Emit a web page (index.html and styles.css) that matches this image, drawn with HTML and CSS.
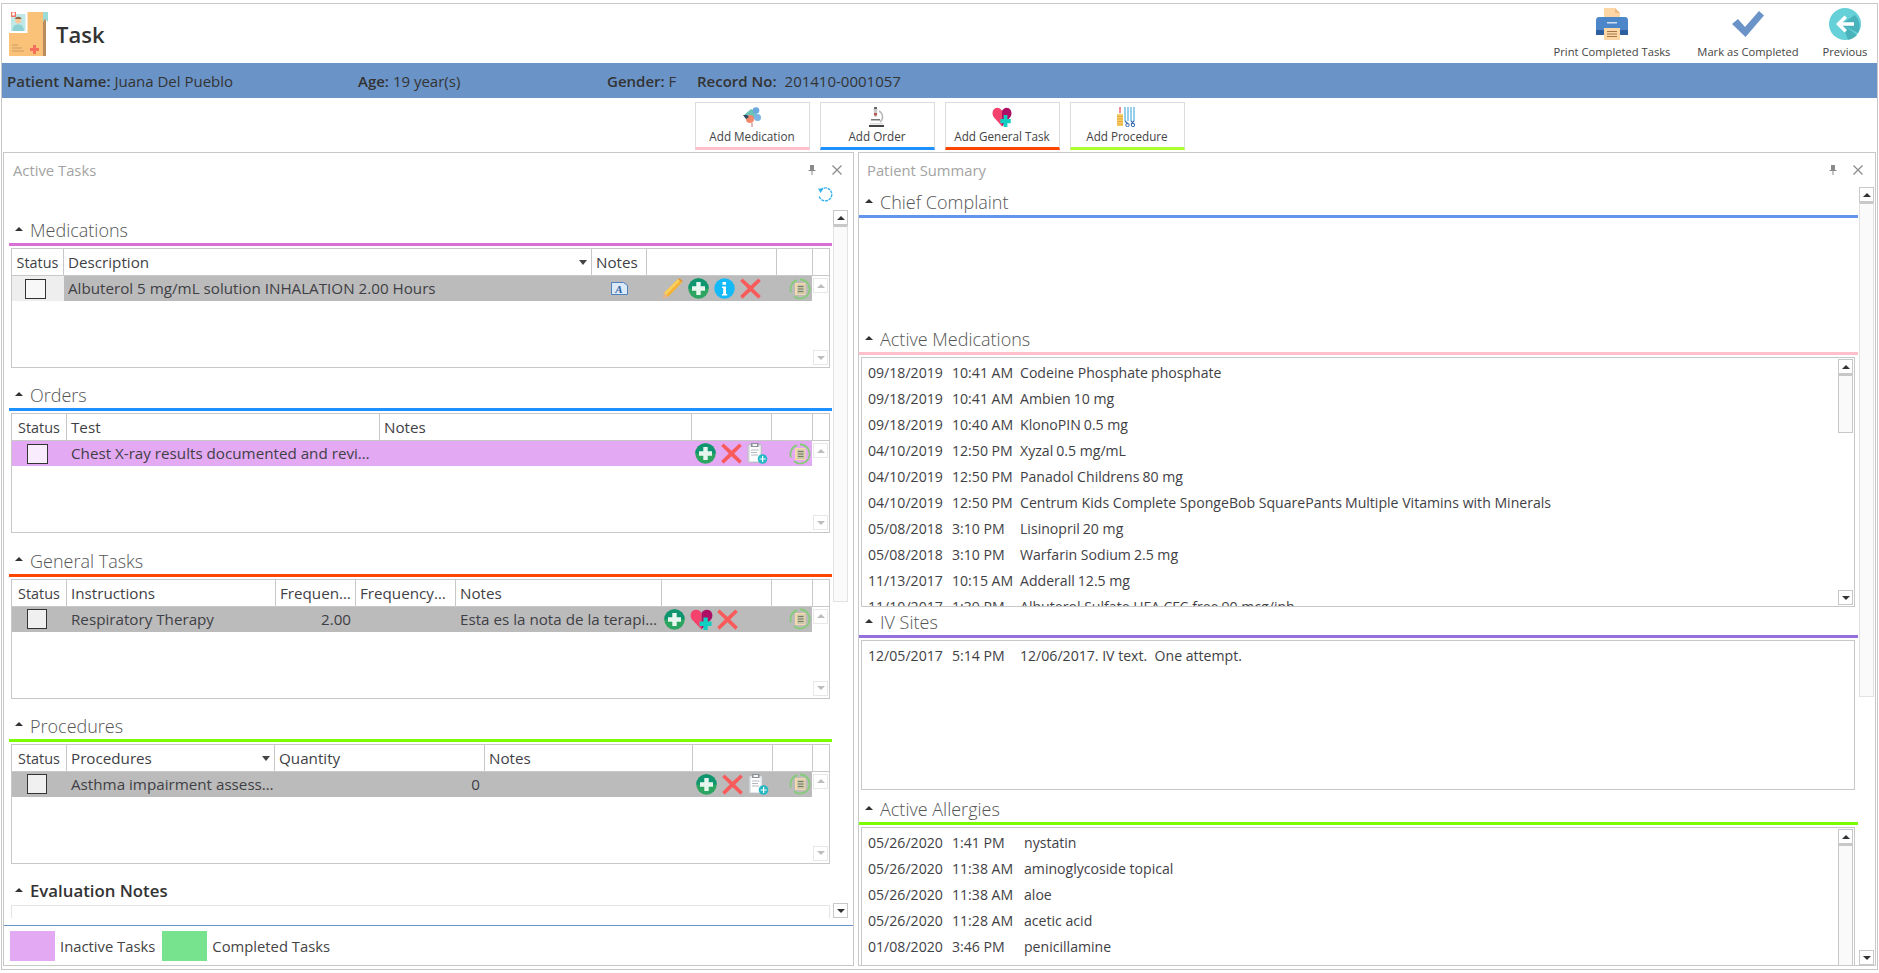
FILE: index.html
```html
<!DOCTYPE html>
<html lang="en">
<head>
<meta charset="utf-8">
<title>Task</title>
<link rel="stylesheet" href="styles.css">
</head>
<body>
<svg class="defs" width="0" height="0" aria-hidden="true">
  <symbol id="i-plus" viewBox="0 0 21 21">
    <circle cx="10.5" cy="10.5" r="10.2" fill="#2ba55f"/>
    <path d="M.3 10.5a10.2 10.2 0 0 1 20.4 0z" fill="#0f9570"/>
    <path d="M8.3 4h4.4v4.3H17v4.4h-4.3V17H8.3v-4.3H4V8.300h4.300z" fill="#e6f6ee"/>
  </symbol>
  <symbol id="i-x" viewBox="0 0 21 21">
    <path d="M2.500 .5 10.500 7.800 18.500 .5 20.800 3 13.200 10.500 20.800 18 18.500 20.800 10.500 13.200 2.500 20.800 .2 18 7.800 10.500 .2 3z" fill="#f95b5b"/>
  </symbol>
  <symbol id="i-info" viewBox="0 0 21 21">
    <circle cx="10.500" cy="10.500" r="10.200" fill="#14b9f8"/>
    <path d="M8.500 4h3.500v2.800H8.500zM8 8.500h4V16h1.200v1.500H8V16h1.200v-6H8z" fill="#fff"/>
  </symbol>
  <symbol id="i-pencil" viewBox="0 0 21 21">
    <path d="M16 1 20 4.500 6 19 2 15z" fill="#f5b336"/>
    <path d="M16 1 18 2.700 4 17 2 15z" fill="#f9cf5f"/>
    <path d="M2 15 6 19 .5 21z" fill="#e8b48c"/>
    <path d="M16 1 18 .5 20.500 3 20 4.500z" fill="#e5912c"/>
  </symbol>
  <symbol id="i-clip" viewBox="0 0 21 21">
    <rect x="1" y="1.500" width="13.500" height="18" rx="1.500" fill="#e2e6ea" stroke="#b9bdc2"/>
    <rect x="3" y="4" width="9.500" height="14" fill="#fff"/>
    <rect x="4" y="0" width="7.500" height="4" fill="#8d9298"/>
    <rect x="5.500" y="1" width="4.500" height="2" fill="#f4f4f4"/>
    <path d="M4 7h7.500M4 9.500h6M4 12h7" stroke="#b3b8bd"/>
    <circle cx="15.500" cy="16" r="4.800" fill="#27b8c6"/>
    <path d="M15 13h1.200v2.400h2.400v1.200h-2.400V19H15v-2.400h-2.400v-1.200H15z" fill="#fff"/>
  </symbol>
  <symbol id="i-note" viewBox="0 0 22 22">
    <path d="M11 1.500a9.500 9.500 0 1 1-6 16.800" fill="none" stroke="#85cc78" stroke-width="1.800"/>
    <path d="M2 14.500A9.500 9.500 0 0 1 8 2.200" fill="none" stroke="#85cc78" stroke-width="1.800"/>
    <rect x="6" y="5" width="10.500" height="12" fill="#f6d8ae"/>
    <rect x="8" y="6.500" width="7.500" height="9.500" fill="#c9c9a8"/>
    <path d="M9 8.500h5.500M9 11h5.500M9 13.500h5.500" stroke="#77786a"/>
  </symbol>
  <symbol id="i-heart" viewBox="0 0 24 21" preserveAspectRatio="none">
    <path d="M12 20.500 2.500 11C-.5 7.800.3 3 3.800 1.300 6.800 0 10 1 12 4z" fill="#f5426c"/>
    <path d="M12 4c2-3 5.200-4 8.200-2.700C23.700 3 24.500 7.800 21.500 11L12 20.500z" fill="#ad0f65"/>
    <path d="M14 8.500h4.500V12.500H22.500V17H18.500V21H14V17H10V12.500h4z" fill="#10cfc0"/>
  </symbol>
  <symbol id="i-caret-d" viewBox="0 0 8 5">
    <path d="M0 0h8L4 5z" fill="#444"/>
  </symbol>
</svg>

<div class="app">
  <header class="top">
    <div class="brand">
      <svg class="logo" viewBox="0 0 39 44" aria-hidden="true">
        <rect x="0" y="0" width="37" height="44" fill="#f9c278"/>
        <path d="M34 2h3v42h-3z" fill="#b98c5c"/>
        <path d="M34 0h5v10l-3-3-2 3z" fill="#9cdcd6"/>
        <rect x="0" y="0" width="18.500" height="21" fill="#fff"/>
        <rect x="2" y="2" width="14.500" height="17" fill="#bfe8e6"/>
        <circle cx="9.200" cy="8.500" r="3" fill="#f6c99a"/>
        <path d="M6 7c.5-3 6-3 6.500 0z" fill="#8d6a45"/>
        <path d="M3.500 19c0-5 2.500-6.500 5.700-6.500s5.700 1.500 5.700 6.500z" fill="#8ed2d4"/>
        <rect x="2" y="-1" width="5" height="6" fill="#f57263"/>
        <rect x="3.200" y=".5" width="2.500" height="3" fill="#fff"/>
        <path d="M3 33h6M3 36h10M3 39h12" stroke="#c99a62" stroke-width="1"/>
        <path d="M24 33h3v3h3v3h-3v3h-3v-3h-3v-3h3z" fill="#f4705a"/>
      </svg>
      <h1 class="page-title">Task</h1>
    </div>
    <nav class="top-actions">
      <div class="act">
        <svg class="act-icon" viewBox="0 0 32 32" aria-hidden="true">
          <path d="M8 0h11l5 5v10H8z" fill="#fdd6a5"/>
          <path d="M19 0l5 5h-5z" fill="#f0bd85"/>
          <path d="M3 9h26c2 0 3 1.500 3 3v15H0V12c0-1.500 1-3 3-3z" fill="#4a86c8"/>
          <path d="M0 22h32v5H0z" fill="#2d5f9e"/>
          <path d="M11 14h10v1.500H11z" fill="#cfe0f2"/>
          <path d="M8 20h16v12H8z" fill="#fdd6a5"/>
          <path d="M11 23.500h10M11 26h10M11 28.500h10" stroke="#a5764a"/>
        </svg>
        <span class="act-label">Print Completed Tasks</span>
      </div>
      <div class="act">
        <svg class="act-icon" viewBox="0 0 32 32" aria-hidden="true">
          <path d="M0 16 6 11 13 19 27 3 32 7.500 13.500 29z" fill="#6a93c7"/>
        </svg>
        <span class="act-label">Mark as Completed</span>
      </div>
      <div class="act act-prev">
        <svg class="act-icon" viewBox="0 0 32 32" aria-hidden="true">
          <circle cx="16" cy="16" r="16" fill="#66d0d9"/>
          <path d="M12 16 26 7a16 16 0 0 1 3 18z M13 16l15 11a16 16 0 0 1-9 4.800z" fill="#49b2ba"/>
          <path d="M15.500 7.500 18 10l-4.300 4.300H25v3.400H13.700L18 22l-2.500 2.500L7 16z" fill="#fff"/>
        </svg>
        <span class="act-label">Previous</span>
      </div>
    </nav>
  </header>

  <div class="patient-bar">
    <div><b>Patient Name:</b> Juana Del Pueblo</div>
    <div><b>Age:</b> 19 year(s)</div>
    <div><b>Gender:</b> F</div>
    <div class="record"><b>Record No:</b><span>201410-0001057</span></div>
  </div>

  <div class="add-row">
    <div class="add-btn add-pink">
      <svg class="add-icon" viewBox="0 0 20 20" aria-hidden="true">
        <path d="M2 8 9 2 15 5 13 11H5z" fill="#6cc4b8"/>
        <circle cx="14" cy="3.500" r="3.300" fill="#6aa8de"/>
        <circle cx="15.500" cy="10.500" r="3.500" fill="#7ab5e6"/>
        <circle cx="8" cy="12" r="4" fill="#f2876c"/>
        <path d="M1 8h4l2 2-3 2z" fill="#2c4a60"/>
        <path d="M10 16v4" stroke="#d9a0a0" stroke-width="1.500"/>
      </svg>
      <span>Add Medication</span>
    </div>
    <div class="add-btn add-blue">
      <svg class="add-icon" viewBox="0 0 20 20" aria-hidden="true">
        <path d="M7 0h3v2H7z" fill="#666"/>
        <path d="M6.500 2h4L9.500 10h-2z" fill="#c9c9c9"/>
        <path d="M7 6h3v2.500H7z" fill="#c0554f"/>
        <path d="M12 4c4 2 5 8 1 11" fill="none" stroke="#bbb" stroke-width="1.600"/>
        <path d="M4 12h9v1.500H4z" fill="#777"/>
        <path d="M3 16h13v1.500H3z" fill="#ddd"/>
        <path d="M2 18h15v2H2z" fill="#444"/>
      </svg>
      <span>Add Order</span>
    </div>
    <div class="add-btn add-red">
      <svg class="add-icon"><use href="#i-heart"/></svg>
      <span>Add General Task</span>
    </div>
    <div class="add-btn add-green">
      <svg class="add-icon" viewBox="0 0 20 20" aria-hidden="true">
        <path d="M2 0h2v6H2z" fill="#ef8b96"/>
        <path d="M0 7h6v12H0z" fill="#f7cd64"/>
        <path d="M0 9.500h6M0 12h6M0 14.500h6M0 17h6" stroke="#e5a83e"/>
        <path d="M8 0v14M11 0v14M14 0v14M17 0v14" stroke="#53aee0" stroke-width="1.200"/>
        <path d="M8 14l3 3M14 14l3 3M17 14l-3 3" stroke="#3b6fb5" stroke-width="1.200"/>
        <circle cx="10.500" cy="18" r="1.700" fill="none" stroke="#3b6fb5"/>
        <circle cx="16" cy="18" r="1.700" fill="none" stroke="#3b6fb5"/>
      </svg>
      <span>Add Procedure</span>
    </div>
  </div>

  <div class="panels">
    <section class="panel panel-left">
      <div class="panel-title">
        <span>Active Tasks</span>
        <div class="panel-tools">
          <svg class="tool" viewBox="0 0 10 10" aria-hidden="true"><path d="M3 0h4v5h1.500v1h-3v4h-1V6h-3V5H3z" fill="#8a8a8a"/></svg>
          <svg class="tool" viewBox="0 0 10 10" aria-hidden="true"><path d="M.5.500l9 9M9.500.500l-9 9" stroke="#8a8a8a" stroke-width="1.200"/></svg>
        </div>
      </div>
      <div class="panel-body">
        <div class="main-col">
          <div class="refresh-row">
            <svg class="refresh" viewBox="0 0 16 16" aria-hidden="true">
              <path d="M3.500 3A6.500 6.500 0 1 1 2 9" fill="none" stroke="#35b2ee" stroke-width="1.400" stroke-dasharray="3 .8"/>
              <path d="M1 1.500 6.500 1.800 3.500 6z" fill="#35b2ee"/>
            </svg>
          </div>

          <div class="sec">
            <div class="sec-head"><i class="caret"></i><h2>Medications</h2></div>
            <div class="line line-orchid"></div>
            <div class="tbl">
              <div class="thead g-med">
                <div class="th th-status">Status</div>
                <div class="th th-sort">Description<svg class="sort"><use href="#i-caret-d"/></svg></div>
                <div class="th">Notes</div><div class="th"></div><div class="th"></div><div class="th th-last"></div>
              </div>
              <div class="tbody">
                <div class="rows">
                  <div class="row row-gray g-med-r">
                    <div class="td td-check td-check-light"><i class="chk"></i></div>
                    <div class="td">Albuterol 5 mg/mL solution INHALATION 2.00 Hours</div>
                    <div class="td td-doc">
                      <svg class="doc-a" viewBox="0 0 17 13" aria-hidden="true">
                        <path d="M.5.500h12l4 3v9H.500z" fill="#dce9f8" stroke="#4f81bd"/>
                        <text x="8" y="11" class="doc-a-text">A</text>
                      </svg>
                    </div>
                    <div class="td td-icons pad-med">
                      <svg class="ic"><use href="#i-pencil"/></svg>
                      <svg class="ic"><use href="#i-plus"/></svg>
                      <svg class="ic"><use href="#i-info"/></svg>
                      <svg class="ic"><use href="#i-x"/></svg>
                    </div>
                    <div class="td td-note"><svg class="ic-note"><use href="#i-note"/></svg></div>
                  </div>
                </div>
                <div class="sb sb-faded">
                  <div class="sb-btn"><i class="caret"></i></div>
                  <div class="sb-btn sb-end"><i class="caret caret-down"></i></div>
                </div>
              </div>
            </div>
          </div>

          <div class="sec">
            <div class="sec-head"><i class="caret"></i><h2>Orders</h2></div>
            <div class="line line-blue"></div>
            <div class="tbl">
              <div class="thead g-ord">
                <div class="th th-status">Status</div>
                <div class="th">Test</div>
                <div class="th">Notes</div><div class="th"></div><div class="th"></div><div class="th th-last"></div>
              </div>
              <div class="tbody">
                <div class="rows">
                  <div class="row row-inactive g-ord-r">
                    <div class="td td-check"><i class="chk chk-pink"></i></div>
                    <div class="td">Chest X-ray results documented and revi…</div>
                    <div class="td"></div>
                    <div class="td td-icons pad-tight">
                      <svg class="ic"><use href="#i-plus"/></svg>
                      <svg class="ic"><use href="#i-x"/></svg>
                      <svg class="ic"><use href="#i-clip"/></svg>
                    </div>
                    <div class="td td-note"><svg class="ic-note"><use href="#i-note"/></svg></div>
                  </div>
                </div>
                <div class="sb sb-faded">
                  <div class="sb-btn"><i class="caret"></i></div>
                  <div class="sb-btn sb-end"><i class="caret caret-down"></i></div>
                </div>
              </div>
            </div>
          </div>

          <div class="sec">
            <div class="sec-head"><i class="caret"></i><h2>General Tasks</h2></div>
            <div class="line line-orange"></div>
            <div class="tbl">
              <div class="thead g-gen">
                <div class="th th-status">Status</div>
                <div class="th">Instructions</div>
                <div class="th">Frequen…</div>
                <div class="th">Frequency…</div>
                <div class="th">Notes</div><div class="th"></div><div class="th"></div><div class="th th-last"></div>
              </div>
              <div class="tbody">
                <div class="rows">
                  <div class="row row-gray g-gen-r">
                    <div class="td td-check"><i class="chk chk-gray"></i></div>
                    <div class="td">Respiratory Therapy</div>
                    <div class="td td-num">2.00</div>
                    <div class="td"></div>
                    <div class="td">Esta es la nota de la terapi…</div>
                    <div class="td td-icons pad-gen">
                      <svg class="ic"><use href="#i-plus"/></svg>
                      <svg class="ic-heart"><use href="#i-heart"/></svg>
                      <svg class="ic"><use href="#i-x"/></svg>
                    </div>
                    <div class="td td-note"><svg class="ic-note"><use href="#i-note"/></svg></div>
                  </div>
                </div>
                <div class="sb sb-faded">
                  <div class="sb-btn"><i class="caret"></i></div>
                  <div class="sb-btn sb-end"><i class="caret caret-down"></i></div>
                </div>
              </div>
            </div>
          </div>

          <div class="sec">
            <div class="sec-head"><i class="caret"></i><h2>Procedures</h2></div>
            <div class="line line-lime"></div>
            <div class="tbl">
              <div class="thead g-pro">
                <div class="th th-status">Status</div>
                <div class="th th-sort">Procedures<svg class="sort"><use href="#i-caret-d"/></svg></div>
                <div class="th">Quantity</div>
                <div class="th">Notes</div><div class="th"></div><div class="th"></div><div class="th th-last"></div>
              </div>
              <div class="tbody">
                <div class="rows">
                  <div class="row row-gray g-pro-r">
                    <div class="td td-check"><i class="chk chk-gray"></i></div>
                    <div class="td">Asthma impairment assess…</div>
                    <div class="td td-num">0</div>
                    <div class="td"></div>
                    <div class="td td-icons pad-tight">
                      <svg class="ic"><use href="#i-plus"/></svg>
                      <svg class="ic"><use href="#i-x"/></svg>
                      <svg class="ic"><use href="#i-clip"/></svg>
                    </div>
                    <div class="td td-note"><svg class="ic-note"><use href="#i-note"/></svg></div>
                  </div>
                </div>
                <div class="sb sb-faded">
                  <div class="sb-btn"><i class="caret"></i></div>
                  <div class="sb-btn sb-end"><i class="caret caret-down"></i></div>
                </div>
              </div>
            </div>
          </div>

          <div class="eval-head"><i class="caret"></i><h2 class="eval-title">Evaluation Notes</h2></div>
          <div class="eval-box"></div>
        </div>
        <div class="sb sb-main">
          <div class="sb-btn"><i class="caret"></i></div>
          <div class="sb-thumb thumb-main"></div>
          <div class="sb-btn sb-end"><i class="caret caret-down"></i></div>
        </div>
      </div>
      <footer class="legend">
        <i class="swatch swatch-inactive"></i><span class="legend-label">Inactive Tasks</span>
        <i class="swatch swatch-done"></i><span class="legend-label">Completed Tasks</span>
      </footer>
    </section>

    <section class="panel panel-right">
      <div class="panel-title panel-title-r">
        <span>Patient Summary</span>
        <div class="panel-tools">
          <svg class="tool" viewBox="0 0 10 10" aria-hidden="true"><path d="M3 0h4v5h1.500v1h-3v4h-1V6h-3V5H3z" fill="#8a8a8a"/></svg>
          <svg class="tool" viewBox="0 0 10 10" aria-hidden="true"><path d="M.5.500l9 9M9.500.500l-9 9" stroke="#8a8a8a" stroke-width="1.200"/></svg>
        </div>
      </div>
      <div class="panel-body panel-body-r">
        <div class="sum-col">
          <div class="sum-head sum-first"><i class="caret"></i><h2>Chief Complaint</h2></div>
          <div class="line line-cornflower"></div>
          <div class="chief-body"></div>

          <div class="sum-head"><i class="caret"></i><h2>Active Medications</h2></div>
          <div class="line line-pink"></div>
          <div class="box box-meds">
            <div class="list">
              <div class="li"><span>09/18/2019</span><span>10:41 AM</span><span class="li-name">Codeine Phosphate<em>phosphate</em></span></div>
              <div class="li"><span>09/18/2019</span><span>10:41 AM</span><span class="li-name">Ambien<em>10 mg</em></span></div>
              <div class="li"><span>09/18/2019</span><span>10:40 AM</span><span class="li-name">KlonoPIN<em>0.5 mg</em></span></div>
              <div class="li"><span>04/10/2019</span><span>12:50 PM</span><span class="li-name">Xyzal<em>0.5 mg/mL</em></span></div>
              <div class="li"><span>04/10/2019</span><span>12:50 PM</span><span class="li-name">Panadol Childrens<em>80 mg</em></span></div>
              <div class="li"><span>04/10/2019</span><span>12:50 PM</span><span class="li-name">Centrum Kids Complete SpongeBob SquarePants<em>Multiple Vitamins with Minerals</em></span></div>
              <div class="li"><span>05/08/2018</span><span>3:10 PM</span><span class="li-name">Lisinopril<em>20 mg</em></span></div>
              <div class="li"><span>05/08/2018</span><span>3:10 PM</span><span class="li-name">Warfarin Sodium<em>2.5 mg</em></span></div>
              <div class="li"><span>11/13/2017</span><span>10:15 AM</span><span class="li-name">Adderall<em>12.5 mg</em></span></div>
              <div class="li"><span>11/10/2017</span><span>1:39 PM</span><span class="li-name">Albuterol Sulfate HFA CFC free<em>90 mcg/inh</em></span></div>
            </div>
            <div class="sb sb-inner">
              <div class="sb-btn"><i class="caret"></i></div>
              <div class="sb-thumb thumb-meds"></div>
              <div class="sb-btn sb-end"><i class="caret caret-down"></i></div>
            </div>
          </div>

          <div class="sum-head sum-iv"><i class="caret"></i><h2>IV Sites</h2></div>
          <div class="line line-purple"></div>
          <div class="box box-iv">
            <div class="list">
              <div class="li li-iv"><span>12/05/2017</span><span>5:14 PM</span><span class="li-note">12/06/2017. IV text.&nbsp; One attempt.</span></div>
            </div>
          </div>

          <div class="sum-head sum-allergy"><i class="caret"></i><h2>Active Allergies</h2></div>
          <div class="line line-lime"></div>
          <div class="box box-allergy">
            <div class="list">
              <div class="li li-al"><span>05/26/2020</span><span>1:41 PM</span><span>nystatin</span></div>
              <div class="li li-al"><span>05/26/2020</span><span>11:38 AM</span><span>aminoglycoside topical</span></div>
              <div class="li li-al"><span>05/26/2020</span><span>11:38 AM</span><span>aloe</span></div>
              <div class="li li-al"><span>05/26/2020</span><span>11:28 AM</span><span>acetic acid</span></div>
              <div class="li li-al"><span>01/08/2020</span><span>3:46 PM</span><span>penicillamine</span></div>
            </div>
            <div class="sb sb-inner sb-allergy">
              <div class="sb-btn"><i class="caret"></i></div>
              <div class="sb-thumb thumb-allergy"></div>
            </div>
          </div>
        </div>
        <div class="sb sb-main-r">
          <div class="sb-btn"><i class="caret"></i></div>
          <div class="sb-thumb thumb-right"></div>
          <div class="sb-btn sb-end"><i class="caret caret-down"></i></div>
        </div>
      </div>
    </section>
  </div>
</div>
</body>
</html>
```
FILE: styles.css
```css
* { box-sizing: border-box; }
html, body { margin: 0; padding: 0; background: #fff; overflow: hidden; }
body { font-family: "Open Sans", "Noto Sans", sans-serif; font-size: 14px; color: #3f3f46; }
.defs { position: absolute; }
h1, h2 { margin: 0; font-weight: 400; }
em { font-style: normal; }

.app {
  margin: 3px 1px 0;
  width: 1877px;
  height: 967px;
  border: 1px solid #c8c8c8;
  display: flex;
  flex-direction: column;
}

/* header */
.top { height: 59px; display: flex; justify-content: space-between; padding: 4px 7px 0 7px; }
.brand { display: flex; align-items: flex-start; }
.logo { width: 39px; height: 44px; margin-top: 4px; }
.page-title { font-size: 22px; line-height: 32px; margin: 10px 0 0 8px; color: #333; font-weight: 600; }
.top-actions { display: flex; }
.act { width: 120px; display: flex; flex-direction: column; align-items: center; margin-left: 16px; }
.act-prev { width: 50px; margin-left: 12px; }
.act-icon { width: 32px; height: 32px; }
.act-label { font-size: 11.2px; line-height: 16px; margin-top: 4px; color: #444; white-space: nowrap; }

.patient-bar {
  height: 35px;
  background: #6a93c7;
  display: grid;
  grid-template-columns: 351px 249px 90px auto;
  align-items: center;
  padding-left: 5px;
  color: #333;
  font-size: 15px;
}
.patient-bar b { font-weight: 600; }
.record span { margin-left: 8px; }

/* add buttons */
.add-row { height: 54px; display: flex; justify-content: center; gap: 10px; padding: 4px 0 0 0; }
.add-btn {
  width: 115px; height: 48px;
  border: 1px solid #dcdcdc;
  border-bottom-width: 3px;
  display: flex; flex-direction: column; align-items: center;
  padding-top: 4px;
  font-size: 11.7px; line-height: 16px; color: #444;
}
.add-icon { width: 20px; height: 20px; margin-bottom: 1px; }
.add-pink { border-bottom-color: #ffc0cb; }
.add-blue { border-bottom-color: #1e90ff; }
.add-red { border-bottom-color: #ff4500; }
.add-green { border-bottom-color: #adff2f; }

/* panels */
.panels { flex: 1; display: flex; gap: 4px; padding: 0 0 3px 1px; min-height: 0; }
.panel { border: 1px solid #c8c8c8; display: flex; flex-direction: column; min-height: 0; overflow: hidden; }
.panel-left { width: 851px; }
.panel-right { width: 1018px; }
.panel-title {
  height: 34px; flex: none;
  display: flex; justify-content: space-between; align-items: center;
  padding: 0 11px 0 9px;
  color: #a3a3a3;
  font-size: 14.8px;
}
.panel-title-r { padding: 0 12px 0 8px; }
.panel-tools { display: flex; gap: 15px; margin-top: -1px; }
.tool { width: 10px; height: 10px; }
.panel-body { height: 731px; flex: none; display: flex; padding-left: 5px; overflow: hidden; }
.panel-body-r { flex: 1; height: auto; padding-left: 0; }
.main-col { width: 823px; flex: none; }

.refresh-row { height: 16px; display: flex; justify-content: flex-end; }
.refresh { width: 16px; height: 16px; margin-right: -1px; }

.sec { height: 165.33px; }
.sec-head { height: 40px; display: flex; align-items: center; padding: 14px 0 0 6px; gap: 7px; }
.sec-head h2, .sum-head h2 { font-size: 18px; line-height: 26px; font-weight: 300; color: #555; }
.caret { display: block; width: 0; height: 0; border: 4px solid transparent; border-top-width: 0; border-bottom: 4px solid #333; margin-bottom: 3px; }
.caret-down { border-bottom: 0; border-top: 4px solid #333; margin: 0; }

.line { height: 3px; }
.line-orchid { background: #da70d6; }
.line-blue { background: #1e90ff; }
.line-orange { background: #ff4500; }
.line-lime { background: #7cfc00; }
.line-cornflower { background: #6495ed; }
.line-pink { background: #ffc0cb; }
.line-purple { background: #9370db; }

/* tables */
.tbl { margin: 2px 0 0 2px; width: 819px; height: 120px; border: 1px solid #c8c8c8; display: flex; flex-direction: column; font-size: 15.2px; }
.thead { height: 27px; flex: none; display: grid; border-bottom: 1px solid #c8c8c8; }
.th { border-right: 1px solid #c8c8c8; padding: 0 4px; line-height: 27px; white-space: nowrap; overflow: hidden; position: relative; }
.th-status { padding: 0; text-align: center; font-size: 14.4px; }
.th-last { border-right: 0; }
.sort { position: absolute; right: 4px; top: 11px; width: 8px; height: 5px; }
.g-med { grid-template-columns: 52px 528px 55px 130px 36px 1fr; }
.g-ord { grid-template-columns: 55px 313px 312px 80px 41px 1fr; }
.g-gen { grid-template-columns: 55px 209px 80px 100px 206px 110px 41px 1fr; }
.g-pro { grid-template-columns: 55px 208px 210px 208px 80px 40px 1fr; }
.g-med-r { grid-template-columns: 52px 528px 55px 130px 35px; }
.g-ord-r { grid-template-columns: 55px 313px 312px 80px 40px; }
.g-gen-r { grid-template-columns: 55px 209px 80px 100px 206px 110px 40px; }
.g-pro-r { grid-template-columns: 55px 208px 210px 208px 80px 39px; }
.tbody { flex: 1; display: flex; min-height: 0; }
.rows { width: 800px; flex: none; }
.row { height: 25px; display: grid; }
.row-gray { background: #bbb; }
.row-inactive { background: #e3aaf3; }
.td { padding: 0 4px; line-height: 25px; white-space: nowrap; overflow: hidden; }
.td-check { display: flex; justify-content: center; align-items: center; padding: 0 5px 0 0; }
.td-check-light { background: #eee; }
.chk { display: block; width: 21px; height: 20px; border: 1px solid #333; background: #f8f8f8; }
.chk-pink { background: #f9ecfd; }
.chk-gray { background: #f0f0f0; width: 20px; }
.td-num { text-align: right; padding-right: 5px; }
.td-doc { display: flex; justify-content: center; align-items: center; padding: 0; }
.doc-a { width: 17px; height: 13px; }
.doc-a-text { font-family: "Liberation Serif", serif; font-style: italic; font-weight: 700; font-size: 11px; fill: #2f5f9e; text-anchor: middle; }
.td-icons { display: flex; align-items: center; gap: 5px; padding: 0; }
.pad-med { padding-left: 15px; }
.pad-tight { padding-left: 3px; }
.pad-gen { padding-left: 2px; }
.ic { width: 21px; height: 21px; flex: none; }
.ic-heart { width: 23px; height: 21px; flex: none; margin: 0 -.5px; }
.td-note { display: flex; justify-content: flex-end; align-items: center; padding: 0 1px 0 0; }
.ic-note { width: 22px; height: 22px; }

/* scrollbars */
.sb { width: 15px; flex: none; display: flex; flex-direction: column; }
.sb-btn { width: 15px; height: 15px; flex: none; border: 1px solid #c8c8c8; display: flex; align-items: center; justify-content: center; background: #fff; }
.sb-btn .caret { margin: 0; }
.sb-end { margin-top: auto; }
.sb-thumb { background: #fafafa; border: 1px solid #e2e2e2; border-top: 2px solid #c8c8c8; flex: none; }
.sb-faded { margin: 2px 0 2px 1px; }
.sb-faded .sb-btn { border-color: #e8e8e8; }
.sb-faded .caret { border-bottom-color: #bdbdbd; }
.sb-faded .caret-down { border-top-color: #bdbdbd; }
.sb-main { margin: 23px 0 0 1px; }
.thumb-main { height: 377px; }
.sb-main-r { margin-left: 1px; }
.thumb-right { height: 495px; }
.sb-inner { margin: 1px 1px 1px 0; }
.thumb-meds { height: 59px; border-color: #c8c8c8; border-top-width: 2px; }
.sb-allergy { margin-bottom: 0; }
.thumb-allergy { height: 130px; border-color: #c8c8c8; }

/* evaluation */
.eval-head { height: 41px; display: flex; align-items: center; padding: 13px 0 0 6px; gap: 7px; }
.eval-title { font-size: 16.8px; font-weight: 600; color: #333; line-height: 24px; }
.eval-box { margin-left: 2px; width: 819px; height: 20px; border: 1px solid #e4e4e4; border-bottom: 0; }

/* legend */
.legend { flex: none; margin-top: 7px; height: 41px; border-top: 1px solid #6a93c7; display: flex; align-items: center; padding: 0 0 0 6px; font-size: 14.8px; }
.swatch { width: 45px; height: 30px; display: block; margin-right: 5px; }
.swatch-inactive { background: #e3aaf3; }
.swatch-done { background: #78e38f; margin-left: 7px; }
.legend-label { color: #444; }

/* patient summary */
.sum-col { width: 999px; flex: none; }
.sum-head { height: 26px; display: flex; align-items: center; gap: 7px; padding-left: 6px; }
.sum-first { margin-top: 2px; }
.chief-body { height: 108px; }
.box { margin: 2px 0 0 2px; width: 994px; border: 1px solid #c8c8c8; display: flex; overflow: hidden; }
.box-meds { height: 250px; }
.box-iv { height: 150px; }
.box-allergy { height: 150px; }
.list { flex: 1; min-width: 0; padding: 2px 0 0 6px; overflow: hidden; font-size: 14.1px; }
.li { height: 26px; display: grid; grid-template-columns: 84px 68px 1fr; align-items: center; line-height: 26px; white-space: nowrap; }
.li-name em { margin-left: 3px; }
.li-iv { grid-template-columns: 84px 68px 1fr; }
.li-al { grid-template-columns: 84px 72px 1fr; }
.sum-iv { margin-top: 2px; }
.sum-allergy { margin-top: 6px; }
```
